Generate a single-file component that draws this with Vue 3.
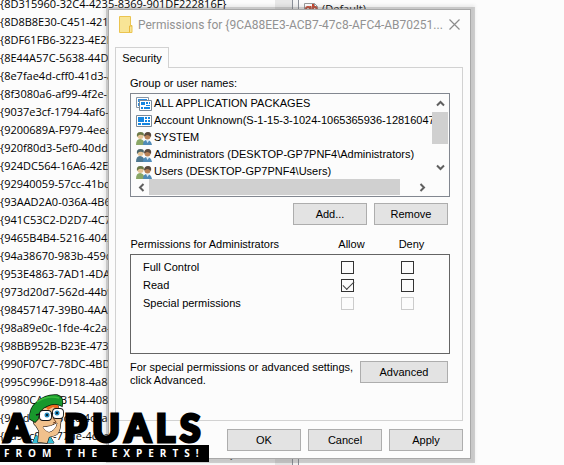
<script setup>
import { ref } from 'vue'

const keys = [
  '{8D315960-32C4-4235-8369-901DF222816F}', '{8D8B8E30-C451-421B-8553', '{8DF61FB6-3223-4E2B-9A1C',
  '{8E44A57C-5638-44D0-8C2D', '{8e7fae4d-cff0-41d3-a26f', '{8f3080a6-af99-4f2e-b806', '{9037e3cf-1794-4af6-8c3b',
  '{9200689A-F979-4eea-8830', '{920f80d3-5ef0-40dd-9b5c', '{924DC564-16A6-42EB-929A', '{92940059-57cc-41bc-a04d',
  '{93AAD2A0-036A-4B6E-A078', '{941C53C2-D2D7-4C74-84EA', '{9465B4B4-5216-4042-9A2C', '{94a38670-983b-459c-bd0e',
  '{953E4863-7AD1-4DA8-B59F', '{973d20d7-562d-44b9-b70b', '{98457147-39B0-4AA1-B138', '{98a89e0c-1fde-4c2a-8373',
  '{98BB952B-B23E-4737-8B0A', '{990F07C7-78DC-4BD0-A145', '{995C996E-D918-4a8c-A302', '{9980CA4C-B154-408A-90E1',
  '{9a4d4c0e-5c2c-4c8a-b3a1', '{9a9ac0a1-77de-4c3a-9cb5', '{9aa46009-3ce0-458a-a354-715610a075e5e0}'
]
const accounts = [
  { name: 'ALL APPLICATION PACKAGES', kind: 'packages' },
  { name: 'Account Unknown(S-1-15-3-1024-1065365936-128160471', kind: 'app' },
  { name: 'SYSTEM', kind: 'people' },
  { name: 'Administrators (DESKTOP-GP7PNF4\\Administrators)', kind: 'people admin' },
  { name: 'Users (DESKTOP-GP7PNF4\\Users)', kind: 'people' }
]
const permissions = ref([
  { name: 'Full Control', allow: false, deny: false },
  { name: 'Read', allow: true, deny: false },
  { name: 'Special permissions', allow: false, deny: false, disabled: true }
])
</script>

<template>
  <main class="desktop">
    <div class="registry">
      <ul class="keys">
        <li v-for="k in keys" :key="k">{{ k }}</li>
      </ul>
      <div class="track"></div>
      <div class="splitter"></div>
      <div class="values">
        <svg width="16" height="16" viewBox="0 0 16 16">
          <path d="M1.500 .5h10l3 3v12h-13z" fill="#fff" stroke="#999" />
          <path d="M11.500 .5v3h3" fill="none" stroke="#999" />
          <g fill="none" stroke="#c8442c" stroke-width="2"><circle cx="5" cy="6" r="2" /><path d="M7.500 3v6M10 1v8" /><circle cx="11.500" cy="6" r="2" /></g>
        </svg>
        <span>(Default)</span>
      </div>
    </div>

    <section class="dialog">
      <header class="title">
        <svg width="14" height="17" viewBox="0 0 14 17">
          <path d="M.5.5h11v9h1.500v7H.5z" fill="#f8e596" stroke="#ebc450" />
          <path d="M10.500 16V10h2.500" fill="none" stroke="#e9b93c" />
        </svg>
        <h1>Permissions for {9CA88EE3-ACB7-47c8-AFC4-AB70251...</h1>
        <button class="close" aria-label="Close">
          <svg width="11" height="11" viewBox="0 0 11 11"><path d="M.5.5l10 10M10.500.5l-10 10" stroke="#8c8c8c" stroke-width="1.200" /></svg>
        </button>
      </header>

      <button class="tab">Security</button>
      <div class="panel">
        <p class="label">Group or user names:</p>
        <div class="listbox">
          <ul class="accounts">
            <li v-for="a in accounts" :key="a.name">
              <svg v-if="a.kind === 'packages'" width="16" height="14" viewBox="0 0 16 14">
                <path d="M.5.5h12v10H.5z" fill="#fff" stroke="#8795a5" /><path d="M2 2h9v3H2zM2 6h2v3H2z" fill="#2c8bdd" />
                <path d="M3.500 3.500h12v10h-12z" fill="#fff" stroke="#7b8997" />
                <path d="M5 5h4v3H5zM10 5h2v2h-2zM13 5h1v2h-1zM10 8h4v1h-4zM5 10h2v2H5zM8 10h6v2H8z" fill="#1686e0" />
              </svg>
              <svg v-else-if="a.kind === 'app'" width="16" height="14" viewBox="0 0 16 14">
                <path d="M.5 1.500h15v11H.5z" fill="#fff" stroke="#7b8997" />
                <path d="M2 3h6v5H2zM9 3h2v2H9zM12 3h2v2h-2zM9 6h2v2H9zM12 6h2v2h-2zM2 9h3v2H2zM6 9h8v2H6z" fill="#1686e0" />
              </svg>
              <svg v-else :class="a.kind" width="16" height="14" viewBox="0 0 16 14">
                <path class="coat" d="M0 14q0-6 4-6t5 6z" />
                <circle cx="4.500" cy="5" r="3" fill="#e5c496" /><path class="hair" d="M1 6Q0 1 4.500 1 9 1 7.500 5 6 3 3 4z" />
                <path d="M7 14q0-5 4-5t5 5z" fill="#508bb8" />
                <circle cx="11.500" cy="5.500" r="3" fill="#b98257" /><path d="M8 5.500Q8 1 12 1t3 5q-2-2-4-2z" fill="#5a493c" />
                <path d="M10 9l1.500 3 2-3z" fill="#d9eaf5" />
              </svg>
              <span>{{ a.name }}</span>
            </li>
          </ul>
          <div class="vscroll">
            <button aria-label="Scroll up"><svg width="9" height="7" viewBox="0 0 9 7"><path d="M1 5.500l3.500-3.500L8 5.500" /></svg></button>
            <i></i>
            <button class="end" aria-label="Scroll down"><svg width="9" height="7" viewBox="0 0 9 7"><path d="M1 1.500L4.500 5 8 1.500" /></svg></button>
          </div>
          <div class="hscroll">
            <button aria-label="Scroll left"><svg width="7" height="9" viewBox="0 0 7 9"><path d="M5.500 1L2 4.500 5.500 8" /></svg></button>
            <i></i>
            <button aria-label="Scroll right"><svg width="7" height="9" viewBox="0 0 7 9"><path d="M1.500 1L5 4.500 1.500 8" /></svg></button>
          </div>
        </div>
        <div class="actions">
          <button class="btn">Add...</button>
          <button class="btn">Remove</button>
        </div>

        <table>
          <thead>
            <tr><th scope="col">Permissions for Administrators</th><th scope="col" class="mark">Allow</th><th scope="col" class="mark last">Deny</th></tr>
          </thead>
          <tbody>
            <tr v-for="p in permissions" :key="p.name">
              <th scope="row">{{ p.name }}</th>
              <td class="mark"><input v-model="p.allow" type="checkbox" :disabled="p.disabled" :aria-label="'Allow ' + p.name" /></td>
              <td class="mark last"><input v-model="p.deny" type="checkbox" :disabled="p.disabled" :aria-label="'Deny ' + p.name" /></td>
            </tr>
          </tbody>
        </table>

        <div class="advanced">
          <p>For special permissions or advanced settings,<br />click Advanced.</p>
          <button class="btn wide">Advanced</button>
        </div>
      </div>

      <footer>
        <button class="btn">OK</button>
        <button class="btn">Cancel</button>
        <button class="btn">Apply</button>
      </footer>
    </section>

    <div class="brand">
      <div class="word">
        <span>A</span>
        <svg width="37" height="51" viewBox="0 0 37 51">
          <path d="M5 49l3-7 5 4 9-3 4 7H4z" fill="#35bdd6" stroke="#111" />
          <path d="M7 26l3-10 20-3 3 13-1 9q-1 7-7 8l-4 1-2 6-9-1 1-11-3-5q-4-3-1-7z" fill="#f1c18c" stroke="#111" stroke-width="1.200" />
          <path d="M17 13l12-5 2 9-6-3-5 3z" fill="#ee6a20" />
          <path d="M2 26Q1 15 9 9 18 1 29 2q7 2 5 11-7-4-15 0-8 3-9 13l-3 3z" fill="#18982c" stroke="#0a210b" stroke-width="1.500" />
          <path d="M9 9q10-7 22-4" fill="none" stroke="#39bd3d" stroke-width="1.500" />
          <rect x="12" y="18" width="11" height="9" rx="3" fill="#fff" stroke="#161616" stroke-width="1.800" />
          <rect x="25" y="16" width="10" height="9" rx="3" fill="#fff" stroke="#161616" stroke-width="1.800" />
          <path d="M8 22l4-1M23 21l2-1" stroke="#161616" stroke-width="1.800" />
          <circle cx="19" cy="22" r="2.500" fill="#2389bd" /><circle cx="29" cy="20" r="2.500" fill="#2389bd" />
          <circle cx="19" cy="22" r="1" /><circle cx="29" cy="20" r="1" />
          <path d="M25 25l3 4-3 1" fill="none" stroke="#704023" />
          <path d="M15 34q8 0 14-4-2 8-8 9-4-1-6-5z" fill="#fff" stroke="#291810" />
        </svg>
        <span>P</span><span>U</span><span>A</span><span>L</span><span>S</span>
      </div>
      <div class="tagline">FROM THE EXPERTS!</div>
    </div>
  </main>
</template>

<style>
body { margin: 0; background: #fcfcfc; }
</style>

<style scoped>
* { box-sizing: border-box; }
.desktop { position: relative; min-height: 100vh; overflow: hidden; background: #fcfcfc; font: 11px/13px "Liberation Sans", Arial, sans-serif; color: #000; }
.registry { display: flex; height: 100vh; overflow: hidden; font: 11px/18px "Open Sans", "Noto Sans", sans-serif; }
ul { list-style: none; margin: 0; padding: 0; }
.keys { flex: 0 0 275px; overflow: hidden; white-space: nowrap; margin-top: -5px; }
.track { flex: 0 0 17px; background: #e8e8e8; }
.splitter { flex: 0 0 7px; border: solid #8a8f98; border-width: 0 1px; background: #f4f4f4; }
.values { display: flex; gap: 3px; padding: 0 4px; }
.values svg { margin-top: 3px; }
.dialog { position: absolute; left: 108px; right: 93px; top: 9px; padding: 0 7px 7px 6px; background: #fcfcfc; border: 1px solid #a8a8a8; box-shadow: 1px 1px 0 3px rgba(110, 110, 110, .28), 0 0 3px 4px rgba(110, 110, 110, .12); }
button { font: inherit; color: inherit; padding: 0; border: 0; background: none; }
.title { display: flex; align-items: center; gap: 5px; height: 29px; padding: 0 3px 0 4px; }
.title svg { flex: none; }
.title h1 { flex: 1; margin: 0; font: 12px/16px Roboto, "Open Sans", sans-serif; color: #929292; white-space: nowrap; }
.close { display: flex; }
.tab { display: block; position: relative; width: 54px; height: 21px; margin-top: 8px; margin-bottom: -1px; background: #fcfcfc; border: 1px solid #d2d2d2; border-bottom: 0; }
.panel { border: 1px solid #d2d2d2; padding: 9px 12px 33px 14px; }
p { margin: 0; }
.label { margin-bottom: 3px; }
.listbox { display: grid; grid-template: 85px 17px / 1fr 17px; border: 1px solid #828790; }
.accounts { overflow: hidden; white-space: nowrap; padding: 1px 0 0 5px; }
.accounts li { display: flex; align-items: center; gap: 2px; height: 17px; line-height: 17px; }
.accounts svg { flex: none; }
.coat { fill: #8aa766; } .hair { fill: #6c7946; }
.admin .coat { fill: #4e7890; } .admin .hair { fill: #4d6569; }
.vscroll { display: flex; flex-direction: column; padding: 1px 1px 3px 0; }
.vscroll button, .hscroll button { flex: none; display: flex; align-items: center; justify-content: center; width: 16px; height: 17px; }
.vscroll i { width: 16px; height: 32px; background: #d0d0d0; }
.vscroll .end { margin-top: auto; }
.hscroll { display: flex; height: 16px; padding-left: 2px; }
.hscroll i { width: 251px; background: #d0d0d0; }
.hscroll button { height: 16px; }
.hscroll button:last-child { margin-left: 14px; }
.vscroll path, .hscroll path { fill: none; stroke: #606060; stroke-width: 2; }
.actions { display: flex; justify-content: flex-end; gap: 7px; padding: 6px 2px 0 0; }
.btn { width: 74px; height: 22px; background: #e3e3e3; border: 1px solid #adadad; font-size: 11px; }
.btn.wide { width: 88px; flex: none; }
table { width: 100%; margin-top: 13px; border-collapse: collapse; }
th, td { font-weight: 400; text-align: left; padding: 0; height: 18px; }
thead th { padding-bottom: 3px; height: 16px; }
.mark { width: 60px; text-align: center; }
.mark.last { width: 72px; padding-right: 12px; }
thead .mark { padding-left: 8px; }
tbody { border: 1px solid #646464; }
tbody th { padding-left: 12px; }
tbody tr:first-child > * { padding-top: 4px; height: 22px; }
tbody tr:last-child > * { padding-bottom: 41px; height: 59px; }
input { appearance: none; display: block; width: 13px; height: 13px; margin: 0 auto; border: 1px solid #333; background: #fcfcfc; }
input:checked::after { content: ""; display: block; width: 10px; height: 5px; margin: 1px 0 0 1px; border: solid #444; border-width: 0 0 1px 1px; transform: rotate(-45deg); }
input:disabled { border-color: #ccc; }
.advanced { display: flex; justify-content: space-between; padding: 7px 2px 0 0; white-space: nowrap; }
footer { display: flex; justify-content: flex-end; gap: 7px; padding-top: 8px; }
.brand { position: absolute; left: 0; bottom: 3px; width: 209px; }
.word { display: flex; align-items: flex-end; gap: 5px; padding: 0 4px; font: 900 37px/30px Lato, sans-serif; color: #000; -webkit-text-stroke: 3px #000; paint-order: stroke; }
.word svg { flex: none; margin: 0 -6px -1px -7px; -webkit-text-stroke: 0; }
.tagline { margin-top: 2px; height: 17px; background: #000; color: #fff; font: 700 10px/17px "Open Sans", sans-serif; letter-spacing: 6px; white-space: nowrap; padding-left: 4px; }
</style>
